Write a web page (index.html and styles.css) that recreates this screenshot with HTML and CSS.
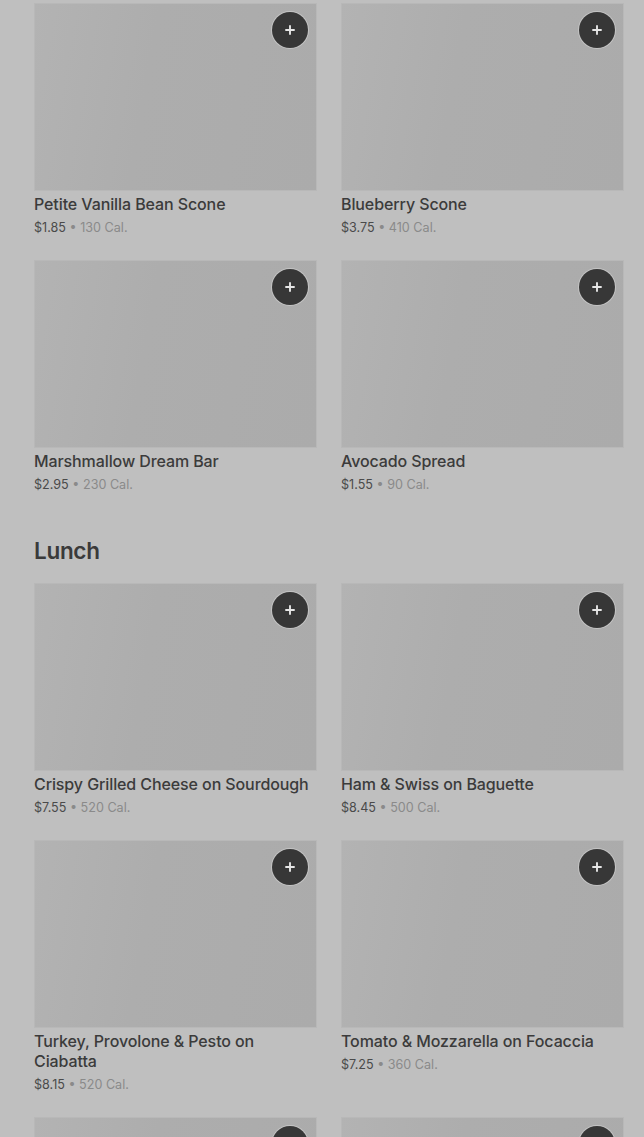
FILE: index.html
```html
<!DOCTYPE html>
<html lang="en">
<head>
    <meta charset="UTF-8">
    <meta name="viewport" content="width=device-width, initial-scale=1.0">
    <title>Menu</title>
    <link rel="stylesheet" href="styles.css">
</head>
<body>
    <div class="menu">
        <section class="section">
            <div class="grid">
                <div class="item">
                    <div class="photo"><button class="add" aria-label="Add"><svg viewBox="0 0 14 14"><path d="M7 1.5v11M1.5 7h11"/></svg></button></div>
                    <div class="name">Petite Vanilla Bean Scone</div>
                    <div class="meta"><span class="price">$1.85</span> • 130 Cal.</div>
                </div>
                <div class="item">
                    <div class="photo"><button class="add" aria-label="Add"><svg viewBox="0 0 14 14"><path d="M7 1.5v11M1.5 7h11"/></svg></button></div>
                    <div class="name">Blueberry Scone</div>
                    <div class="meta"><span class="price">$3.75</span> • 410 Cal.</div>
                </div>
                <div class="item">
                    <div class="photo"><button class="add" aria-label="Add"><svg viewBox="0 0 14 14"><path d="M7 1.5v11M1.5 7h11"/></svg></button></div>
                    <div class="name">Marshmallow Dream Bar</div>
                    <div class="meta"><span class="price">$2.95</span> • 230 Cal.</div>
                </div>
                <div class="item">
                    <div class="photo"><button class="add" aria-label="Add"><svg viewBox="0 0 14 14"><path d="M7 1.5v11M1.5 7h11"/></svg></button></div>
                    <div class="name">Avocado Spread</div>
                    <div class="meta"><span class="price">$1.55</span> • 90 Cal.</div>
                </div>
            </div>
        </section>

        <section class="section">
            <h2>Lunch</h2>
            <div class="grid">
                <div class="item">
                    <div class="photo"><button class="add" aria-label="Add"><svg viewBox="0 0 14 14"><path d="M7 1.5v11M1.5 7h11"/></svg></button></div>
                    <div class="name">Crispy Grilled Cheese on Sourdough</div>
                    <div class="meta"><span class="price">$7.55</span> • 520 Cal.</div>
                </div>
                <div class="item">
                    <div class="photo"><button class="add" aria-label="Add"><svg viewBox="0 0 14 14"><path d="M7 1.5v11M1.5 7h11"/></svg></button></div>
                    <div class="name">Ham &amp; Swiss on Baguette</div>
                    <div class="meta"><span class="price">$8.45</span> • 500 Cal.</div>
                </div>
                <div class="item">
                    <div class="photo"><button class="add" aria-label="Add"><svg viewBox="0 0 14 14"><path d="M7 1.5v11M1.5 7h11"/></svg></button></div>
                    <div class="name">Turkey, Provolone &amp; Pesto on Ciabatta</div>
                    <div class="meta"><span class="price">$8.15</span> • 520 Cal.</div>
                </div>
                <div class="item">
                    <div class="photo"><button class="add" aria-label="Add"><svg viewBox="0 0 14 14"><path d="M7 1.5v11M1.5 7h11"/></svg></button></div>
                    <div class="name">Tomato &amp; Mozzarella on Focaccia</div>
                    <div class="meta"><span class="price">$7.25</span> • 360 Cal.</div>
                </div>
                <div class="item">
                    <div class="photo"><button class="add" aria-label="Add"><svg viewBox="0 0 14 14"><path d="M7 1.5v11M1.5 7h11"/></svg></button></div>
                </div>
                <div class="item">
                    <div class="photo"><button class="add" aria-label="Add"><svg viewBox="0 0 14 14"><path d="M7 1.5v11M1.5 7h11"/></svg></button></div>
                </div>
            </div>
        </section>
    </div>
</body>
</html>
```

FILE: styles.css
```css
body {
    margin: 0;
    background-color: #bfbfbf;
    font-family: Inter, "Noto Sans", sans-serif;
    color: #3a3a3a;
    overflow: hidden;
}
.menu {
    padding: 3px 20px 0 34px;
}
.section {
    margin-bottom: 43px;
}
h2 {
    margin: 0 0 18px;
    font-size: 22.5px;
    line-height: 28px;
    font-weight: 600;
    letter-spacing: -0.3px;
    color: #3a3a3a;
}
.grid {
    display: grid;
    grid-template-columns: 1fr 1fr;
    column-gap: 24px;
    row-gap: 23px;
}
.photo {
    position: relative;
    height: 188px;
    background: linear-gradient(100deg, #b3b3b3 0%, #adadad 40%, #ababab 100%);
    box-shadow: inset 0 0 0 1px #b8b8b8;
}
.add {
    position: absolute;
    top: 9px;
    right: 9px;
    width: 36px;
    height: 36px;
    padding: 0;
    border: none;
    border-radius: 50%;
    background-color: #373737;
    box-shadow: 0 0 0 1px #c4c4c4;
    display: flex;
    align-items: center;
    justify-content: center;
    cursor: pointer;
}
.add svg {
    width: 12px;
    height: 12px;
    fill: none;
    stroke: #e6e6e6;
    stroke-width: 2.2;
}
.name {
    margin-top: 3px;
    font-size: 16px;
    line-height: 20px;
    font-weight: 500;
    letter-spacing: -0.1px;
    color: #3b3b3b;
}
.meta {
    margin-top: 5px;
    font-size: 12.6px;
    line-height: 18px;
    color: #8a8a8a;
}
.price {
    color: #4a4a4a;
}
```
